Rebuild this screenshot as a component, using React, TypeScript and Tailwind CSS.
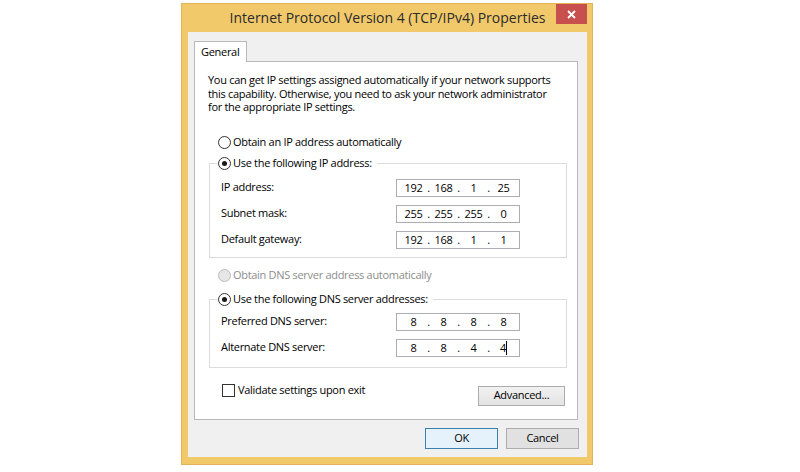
import { Fragment } from "react";

const ipRows = [
  { label: "IP address:", parts: ["192", "168", "1", "25"] },
  { label: "Subnet mask:", parts: ["255", "255", "255", "0"] },
  { label: "Default gateway:", parts: ["192", "168", "1", "1"] },
];

const dnsRows = [
  { label: "Preferred DNS server:", parts: ["8", "8", "8", "8"] },
  { label: "Alternate DNS server:", parts: ["8", "8", "4", "4"], caret: true },
];

const Radio = ({ checked = false, disabled = false }: { checked?: boolean; disabled?: boolean }) => (
  <span
    className={`w-[13px] h-[13px] rounded-full border flex items-center justify-center shrink-0 ${
      disabled ? "border-[#bcbcbc] bg-[#e6e6e6]" : "border-[#333333] bg-white"
    }`}
  >
    {checked && <span className="w-[5px] h-[5px] rounded-full bg-[#1a1a1a]" />}
  </span>
);

const IpBox = ({ parts, caret = false }: { parts: string[]; caret?: boolean }) => (
  <div className="w-[124px] h-[18px] border border-[#abadb3] bg-white flex items-center pl-[4px] text-[11px] leading-none">
    {parts.map((p, i) => (
      <Fragment key={i}>
        {i > 0 && <span className="w-[5px] text-center">.</span>}
        <span className="w-[25px] flex justify-center items-center">
          {p}
          {caret && i === 3 && <span className="inline-block w-[1px] h-[14px] bg-black" />}
        </span>
      </Fragment>
    ))}
  </div>
);

const Row = ({ label, parts, caret }: { label: string; parts: string[]; caret?: boolean }) => (
  <div className="flex items-center h-[18px]">
    <div className="w-[175px]">{label}</div>
    <IpBox parts={parts} caret={caret} />
  </div>
);

export default function App() {
  return (
    <div className="w-[800px] h-[472px] bg-white overflow-hidden pl-[181px] pt-[3px] text-black font-['Segoe_UI','Open_Sans','Noto_Sans',sans-serif] text-[11px] tracking-[-0.3px]">
      <div className="w-[412px] h-[462px] bg-[#f1c96b] border border-[#e2b358] flex flex-col pl-[6px] pr-[5px] pb-[7px]">
        {/* title bar */}
        <div className="grid grid-cols-[1fr_auto_1fr] h-[28px] shrink-0">
          <div />
          <div className="text-[14px] text-[#2b2b2b] leading-[28px] whitespace-nowrap tracking-normal">
            Internet Protocol Version 4 (TCP/IPv4) Properties
          </div>
          <div className="flex justify-end items-start">
            <div className="w-[31px] h-[20px] bg-[#c7504f] flex items-center justify-center">
              <svg width="9" height="9" viewBox="0 0 9 9">
                <path d="M1 1L8 8M8 1L1 8" stroke="white" strokeWidth="1.8" />
              </svg>
            </div>
          </div>
        </div>

        {/* client area */}
        <div className="flex-1 bg-[#f0f0f0] flex flex-col pl-[6px] pr-[8px] pt-[9px] pb-[8px]">
          <div className="flex">
            <div className="relative z-10 w-[53px] h-[21px] bg-white border border-b-0 border-[#b9b9b9] flex items-center pl-[6px]">
              General
            </div>
          </div>
          <div className="flex-1 -mt-[1px] mr-[1px] bg-white border border-[#b9b9b9] flex flex-col pl-[13px] pt-[11px]">
            <div className="leading-[13.5px] whitespace-nowrap">
              You can get IP settings assigned automatically if your network supports
              <br />
              this capability. Otherwise, you need to ask your network administrator
              <br />
              for the appropriate IP settings.
            </div>

            <div className="flex items-center gap-[2px] h-[16px] mt-[21px] ml-[10px]">
              <Radio />
              <span>Obtain an IP address automatically</span>
            </div>

            <fieldset className="mt-[5px] ml-[1px] w-[358px] border border-[#dcdcdc] pl-[11px] pt-[7px] pb-[8px]">
              <legend className="-ml-[3px] pr-[5px]">
                <span className="flex items-center gap-[2px] h-[16px]">
                  <Radio checked />
                  <span>Use the following IP address:</span>
                </span>
              </legend>
              <div className="flex flex-col gap-[8px]">
                {ipRows.map((r) => (
                  <Row key={r.label} label={r.label} parts={r.parts} />
                ))}
              </div>
            </fieldset>

            <div className="flex items-center gap-[2px] h-[16px] mt-[10px] ml-[10px] text-[#8d8d8d]">
              <Radio disabled />
              <span>Obtain DNS server address automatically</span>
            </div>

            <fieldset className="mt-[8px] ml-[1px] w-[358px] border border-[#dcdcdc] pl-[11px] pt-[5px] pb-[10px]">
              <legend className="-ml-[3px] pr-[5px]">
                <span className="flex items-center gap-[2px] h-[16px]">
                  <Radio checked />
                  <span>Use the following DNS server addresses:</span>
                </span>
              </legend>
              <div className="flex flex-col gap-[8px]">
                {dnsRows.map((r) => (
                  <Row key={r.label} label={r.label} parts={r.parts} caret={r.caret} />
                ))}
              </div>
            </fieldset>

            <div className="flex items-start justify-between mt-[15px] w-[358px] ml-[1px]">
              <div className="flex items-center gap-[3px] h-[16px] ml-[13px]">
                <span className="w-[13px] h-[13px] border border-[#333333] bg-white" />
                <span>Validate settings upon exit</span>
              </div>
              <button className="mt-[3px] mr-[2px] w-[87px] h-[20px] border border-[#acacac] bg-gradient-to-b from-[#f2f2f2] to-[#e3e3e3]">
                Advanced...
              </button>
            </div>
          </div>

          <div className="flex justify-end gap-[8px] mt-[8px] h-[21px]">
            <button className="w-[73px] h-[21px] border border-[#3c7fb1] bg-[#e5f1fb]">OK</button>
            <button className="w-[73px] h-[21px] border border-[#adadad] bg-[#e1e1e1]">Cancel</button>
          </div>
        </div>
      </div>
    </div>
  );
}
